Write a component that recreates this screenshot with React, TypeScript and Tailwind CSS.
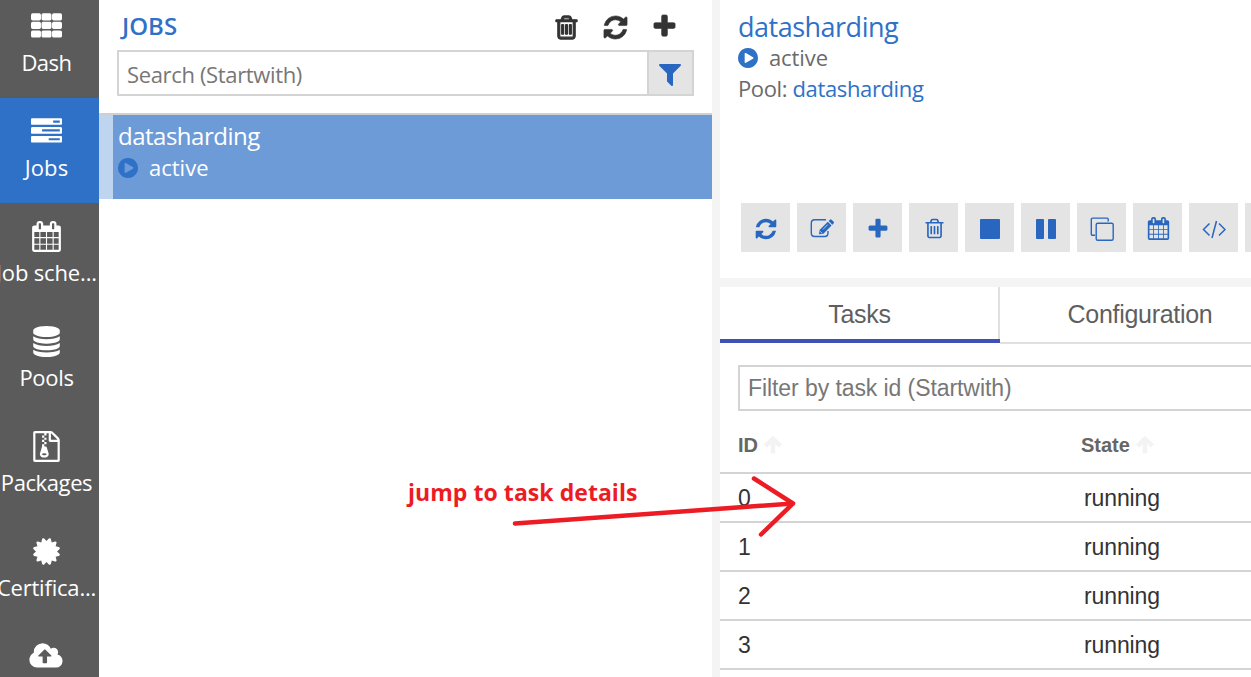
import React from "react";

const paths = {
  th: "M96 128h384q96 0 96 96v224q0 96-96 96h-384q-96 0-96-96v-224q0-96 96-96zM704 128h384q96 0 96 96v224q0 96-96 96h-384q-96 0-96-96v-224q0-96 96-96zM1312 128h384q96 0 96 96v224q0 96-96 96h-384q-96 0-96-96v-224q0-96 96-96zM96 624h384q96 0 96 96v224q0 96-96 96h-384q-96 0-96-96v-224q0-96 96-96zM704 624h384q96 0 96 96v224q0 96-96 96h-384q-96 0-96-96v-224q0-96 96-96zM1312 624h384q96 0 96 96v224q0 96-96 96h-384q-96 0-96-96v-224q0-96 96-96zM96 1120h384q96 0 96 96v224q0 96-96 96h-384q-96 0-96-96v-224q0-96 96-96zM704 1120h384q96 0 96 96v224q0 96-96 96h-384q-96 0-96-96v-224q0-96 96-96zM1312 1120h384q96 0 96 96v224q0 96-96 96h-384q-96 0-96-96v-224q0-96 96-96z",
  tasks:
    "M1024 1408h640v-128h-640v128zm-384-512h1024v-128h-1024v128zm640-512h384v-128h-384v128zm512 832v256q0 26-19 45t-45 19h-1664q-26 0-45-19t-19-45v-256q0-26 19-45t45-19h1664q26 0 45 19t19 45zm0-512v256q0 26-19 45t-45 19h-1664q-26 0-45-19t-19-45v-256q0-26 19-45t45-19h1664q26 0 45 19t19 45zm0-512v256q0 26-19 45t-45 19h-1664q-26 0-45-19t-19-45v-256q0-26 19-45t45-19h1664q26 0 45 19t19 45z",
  refresh:
    "M1639 1056q0 5-1 7-64 268-268 434.5t-478 166.5q-146 0-282.5-55t-243.5-157l-129 129q-19 19-45 19t-45-19-19-45v-448q0-26 19-45t45-19h448q26 0 45 19t19 45-19 45l-137 137q71 66 161 102t187 36q134 0 250-65t186-179q11-17 53-117 8-23 30-23h192q13 0 22.5 9.5t9.5 22.5zm25-800v448q0 26-19 45t-45 19h-448q-26 0-45-19t-19-45 19-45l138-138q-148-137-349-137-134 0-250 65t-186 179q-11 17-53 117-8 23-30 23h-199q-13 0-22.5-9.5t-9.5-22.5v-7q65-268 270-434.5t480-166.5q146 0 284 55.5t245 156.5l130-129q19-19 45-19t45 19 19 45z",
  trash:
    "M704 736v576q0 14-9 23t-23 9h-64q-14 0-23-9t-9-23v-576q0-14 9-23t23-9h64q14 0 23 9t9 23zm256 0v576q0 14-9 23t-23 9h-64q-14 0-23-9t-9-23v-576q0-14 9-23t23-9h64q14 0 23 9t9 23zm256 0v576q0 14-9 23t-23 9h-64q-14 0-23-9t-9-23v-576q0-14 9-23t23-9h64q14 0 23 9t9 23zm128 724v-948h-896v948q0 22 7 40.5t14.5 27 10.5 8.5h832q3 0 10.5-8.5t14.5-27 7-40.5zm-672-1076h448l-48-117q-7-9-17-11h-317q-10 2-17 11zm928 32v64q0 14-9 23t-23 9h-96v948q0 83-47 143.5t-113 60.5h-832q-66 0-113-58.5t-47-141.5v-952h-96q-14 0-23-9t-9-23v-64q0-14 9-23t23-9h309l70-167q15-37 54-63t79-26h320q40 0 79 26t54 63l70 167h309q14 0 23 9t9 23z",
  plus: "M1600 736v192q0 40-28 68t-68 28h-416v416q0 40-28 68t-68 28h-192q-40 0-68-28t-28-68v-416h-416q-40 0-68-28t-28-68v-192q0-40 28-68t68-28h416v-416q0-40 28-68t68-28h192q40 0 68 28t28 68v416h416q40 0 68 28t28 68z",
  filter:
    "M1595 295q17 41-14 70l-493 493v742q0 42-39 59-13 5-25 5-27 0-45-19l-256-256q-19-19-19-45v-486l-493-493q-31-29-14-70 17-39 59-39h1280q42 0 59 39z",
  play: "M896 128q209 0 385.5 103t279.5 279.5 103 385.5-103 385.5-279.5 279.5-385.5 103-385.5-103-279.5-279.5-103-385.5 103-385.5 279.5-279.5 385.5-103zm384 823q32-18 32-55t-32-55l-544-320q-31-19-64-1-32 19-32 55v640q0 36 32 55 16 8 32 8 17 0 32-9z",
  database:
    "M896 768q237 0 443-43t325-127v170q0 69-103 128t-280 93.5-385 34.5-385-34.5-280-93.5-103-128v-170q119 84 325 127t443 43zm0 768q237 0 443-43t325-127v170q0 69-103 128t-280 93.5-385 34.5-385-34.5-280-93.5-103-128v-170q119 84 325 127t443 43zm0-384q237 0 443-43t325-127v170q0 69-103 128t-280 93.5-385 34.5-385-34.5-280-93.5-103-128v-170q119 84 325 127t443 43zm0-1152q208 0 385 34.5t280 93.5 103 128v128q0 69-103 128t-280 93.5-385 34.5-385-34.5-280-93.5-103-128v-128q0-69 103-128t280-93.5 385-34.5z",
  certificate:
    "M1376 896l138 135q30 28 20 70-12 41-52 51l-188 48 53 186q12 41-19 70-29 31-70 19l-186-53-48 188q-10 40-51 52-12 2-19 2-31 0-51-22l-135-138-135 138q-28 30-70 20-41-11-51-52l-48-188-186 53q-41 12-70-19-31-29-19-70l53-186-188-48q-40-10-52-51-10-42 20-70l138-135-138-135q-30-28-20-70 12-41 52-51l188-48-53-186q-12-41 19-70 29-31 70-19l186 53 48-188q10-41 51-51 41-12 70 19l135 139 135-139q29-30 70-19 41 10 51 51l48 188 186-53q41-12 70 19 31 29 19 70l-53 186 188 48q40 10 52 51 10 42-20 70z",
  calendar:
    "M192 1664h288v-288h-288v288zm352 0h320v-288h-320v288zm-352-352h288v-320h-288v320zm352 0h320v-320h-320v320zm-352-384h288v-288h-288v288zm736 736h320v-288h-320v288zm-384-736h320v-288h-320v288zm768 736h288v-288h-288v288zm-384-352h320v-320h-320v320zm-352-864v-288q0-13-9.5-22.5t-22.5-9.5h-64q-13 0-22.5 9.5t-9.5 22.5v288q0 13 9.5 22.5t22.5 9.5h64q13 0 22.5-9.5t9.5-22.5zm736 864h288v-320h-288v320zm-384-384h320v-288h-320v288zm384 0h288v-288h-288v288zm32-480v-288q0-13-9.5-22.5t-22.5-9.5h-64q-13 0-22.5 9.5t-9.5 22.5v288q0 13 9.5 22.5t22.5 9.5h64q13 0 22.5-9.5t9.5-22.5zm384-64v1280q0 52-38 90t-90 38h-1408q-52 0-90-38t-38-90v-1280q0-52 38-90t90-38h128v-96q0-66 47-113t113-47h64q66 0 113 47t47 113v96h384v-96q0-66 47-113t113-47h64q66 0 113 47t47 113v96h128q52 0 90 38t38 90z",
  cloud:
    "M1216 864q0-14-9-23l-352-352q-9-9-23-9t-23 9l-351 351q-10 12-10 24 0 14 9 23t23 9h224v352q0 13 9.5 22.5t22.5 9.5h192q13 0 22.5-9.5t9.5-22.5v-352h224q13 0 22.5-9.5t9.5-22.5zm640 288q0 159-112.5 271.5t-271.5 112.5h-1088q-185 0-316.5-131.5t-131.5-316.5q0-130 70-240t188-165q-2-30-2-43 0-212 150-362t362-150q156 0 285.5 87t188.5 231q71-62 166-62 106 0 181 75t75 181q0 76-41 138 130 31 213.5 135.5t83.5 238.5z",
  archive:
    "M768 384v-128h-128v128h128zm128 128v-128h-128v128h128zm-128 128v-128h-128v128h128zm128 128v-128h-128v128h128zm700-388q28 28 48 76t20 88v1152q0 40-28 68t-68 28h-1344q-40 0-68-28t-28-68v-1600q0-40 28-68t68-28h896q40 0 88 20t76 48zm-444-244v376h376q-10-29-22-41l-313-313q-12-12-41-22zm384 1528v-1024h-416q-40 0-68-28t-28-68v-416h-128v128h-128v-128h-512v1536h1280zm-627-721l107 349q8 27 8 52 0 83-72.5 137.5t-183.5 54.5-183.5-54.5-72.5-137.5q0-25 8-52 21-63 120-396v-128h128v128h79q22 0 39 13t23 34zm-141 465q53 0 90.5-19t37.5-45-37.5-45-90.5-19-90.5 19-37.5 45 37.5 45 90.5 19z",
};

type IconName = keyof typeof paths;

function Icon({ name, className, box = "0 0 1792 1792", bold = 0 }: { name: IconName; className: string; box?: string; bold?: number }) {
  return (
    <svg viewBox={box} className={`block shrink-0 overflow-visible ${className}`} fill="currentColor" stroke={bold ? "currentColor" : "none"} strokeWidth={bold}>
      <path d={paths[name]} />
    </svg>
  );
}

const nav: { label: string; icon: IconName; box?: string; spacing: string }[] = [
  { label: "Dash", icon: "th", spacing: "tracking-[-0.5px]" },
  { label: "Jobs", icon: "tasks", spacing: "tracking-[0.1px]" },
  { label: "Job sche...", icon: "calendar", spacing: "tracking-[-0.15px]" },
  { label: "Pools", icon: "database", spacing: "tracking-[-0.3px]" },
  { label: "Packages", icon: "archive", spacing: "tracking-[-0.4px]" },
  { label: "Certifica...", icon: "certificate", box: "-128 0 1792 1792", spacing: "tracking-[-0.2px]" },
  { label: "", icon: "cloud", box: "32 0 1792 1792", spacing: "" },
];

function Sidebar() {
  return (
    <nav className="w-[99px] h-full shrink-0 overflow-hidden bg-[#5b5b5b] text-white">
      <div className="-mt-[7px]">
        {nav.map((n) => (
          <div key={n.icon} className={`flex h-[105px] flex-col items-center pr-[6px] pt-[18px] ${n.label === "Jobs" ? "bg-[#2f71c7]" : ""}`}>
            <Icon name={n.icon} box={n.box} className="size-[31px]" />
            <span className={`mt-[5px] whitespace-nowrap text-[22px] leading-[30px] ${n.spacing}`}>{n.label}</span>
          </div>
        ))}
      </div>
    </nav>
  );
}

function JobList() {
  return (
    <section className="flex h-full w-[613px] shrink-0 flex-col bg-white">
      <div className="flex h-[50px] items-center pl-[23px] pr-[34px] pt-[4px]">
        <h1 className="mb-[2px] flex-1 text-[24px] font-semibold leading-[30px] text-[#2f71c7]">JOBS</h1>
        <div className="flex items-center text-[#333]">
          <Icon name="trash" bold={80} className="mr-[22px] size-[27px]" />
          <Icon name="refresh" bold={40} className="mr-[22px] size-[27px]" />
          <Icon name="plus" bold={40} className="mb-[1px] size-[27px]" />
        </div>
      </div>
      <div className="ml-[18px] flex h-[46px] w-[577px] border-2 border-[#d4d4d4]">
        <div className="flex flex-1 items-center pl-[8px] pt-[2px] text-[22px] tracking-[-0.35px] text-[#777]">Search (Startwith)</div>
        <div className="flex w-[45px] items-center justify-center border-l-2 border-[#d4d4d4] bg-[#e4e4e4] pr-[1px] pt-[2px] text-[#2866c0]">
          <Icon name="filter" className="size-[28px]" />
        </div>
      </div>
      <div className="mt-[17px] border-t-2 border-[#d0d0d0]">
        <div className="h-[84px] border-l-[14px] border-[#bfd4ee] bg-[#6d9bd7] pl-[5px] pt-[4px] text-white">
          <div className="text-[24px] leading-[33px] tracking-[-0.5px]">datasharding</div>
          <div className="flex h-[31px] items-center">
            <Icon name="play" box="128 128 1536 1536" className="mr-[11px] size-[20px] text-[#2f71c7]" />
            <span className="-mt-[2px] text-[22px] leading-[30px]">active</span>
          </div>
        </div>
      </div>
    </section>
  );
}

const tools = [
  <Icon name="refresh" className="size-[24px]" />,
  <svg viewBox="0 0 24 24" className="size-[24px] overflow-visible" fill="none" stroke="currentColor">
    <path d="M16 2.700H4.700Q1.300 2.700 1.300 6.200V16Q1.300 19.500 4.700 19.500H14.700Q18 19.500 18 16V14" strokeWidth="1.400" />
    <path d="M9 17.300L9.600 13L17.800 4.800L21.600 8.600L13.400 16.800Z" fill="currentColor" stroke="none" />
    <path d="M18.600 4L20 2.700Q20.800 2 21.600 2.700L23.700 4.800Q24.400 5.600 23.700 6.300L22.400 7.800Z" fill="currentColor" stroke="none" />
    <path d="M13 12.400L17.800 7.600M10.200 14.400L12 16.200" stroke="#e4e4e4" strokeWidth="0.800" />
  </svg>,
  <Icon name="plus" className="size-[24px]" />,
  <Icon name="trash" className="size-[23px]" />,
  <svg viewBox="0 0 20 20" className="size-[20px]" fill="currentColor">
    <rect width="20" height="20" rx="1" />
  </svg>,
  <svg viewBox="0 0 20 20" className="size-[20px]" fill="currentColor">
    <rect width="8" height="20" rx="1" />
    <rect x="12" width="8" height="20" rx="1" />
  </svg>,
  <svg viewBox="0 0 24 24" className="size-[24px]" fill="none" stroke="currentColor" strokeWidth="1.400">
    <rect x="6.200" y="6.200" width="17" height="17" rx="1.500" />
    <path d="M5 18.200H2.500Q1.300 18.200 1.300 17V2.300Q1.300 1.100 2.500 1.100H17Q18.200 1.100 18.200 2.300V4.500" />
  </svg>,
  <Icon name="calendar" className="size-[23px]" />,
  <svg viewBox="0 0 24 24" className="size-[24px]" fill="none" stroke="currentColor" strokeWidth="1.500">
    <path d="M7.500 6.500L1.500 12.500L7.500 18.500M17 6.500L23 12.500L17 18.500M14.500 4L10 21" />
  </svg>,
  null,
];

function SortArrow() {
  return (
    <svg viewBox="0 0 18 18" className="ml-[6px] size-[18px]" fill="none" stroke="#f3f3f3" strokeWidth="4.500">
      <path d="M1.500 10L9 2.800L16.500 10M9 4V17.500" />
    </svg>
  );
}

function Details() {
  return (
    <section className="flex h-full min-w-0 flex-1 flex-col overflow-hidden bg-white">
      <header className="h-[278px] shrink-0 pl-[18px] pt-[11px] text-[#6a6a6a]">
        <div className="text-[27px] leading-[32px] tracking-[-0.5px] text-[#2f71c7]">datasharding</div>
        <div className="flex h-[29px] items-center">
          <Icon name="play" box="128 128 1536 1536" className="mr-[11px] size-[20px] text-[#2f71c7]" />
          <span className="-mt-[2px] text-[22px] leading-[30px] tracking-[-0.1px]">active</span>
        </div>
        <div className="text-[22px] leading-[33px] tracking-[-0.37px]">
          Pool: <span className="text-[#2f71c7]">datasharding</span>
        </div>
        <div className="ml-[3px] mt-[98px] flex gap-[7px]">
          {tools.map((t, i) => (
            <div key={i} className="flex size-[49px] shrink-0 items-center justify-center bg-[#e4e4e4] pl-[1px] pt-[2px] text-[#2866c0]">
              {t}
            </div>
          ))}
        </div>
      </header>
      <div className="h-[9px] shrink-0 bg-[#f4f4f4]" />
      <div className="flex h-[57px] shrink-0 font-['Liberation_Sans',sans-serif] text-[25px] tracking-[-0.3px] text-[#5f5f5f]">
        <div className="flex h-[56px] w-[280px] shrink-0 flex-col">
          <div className="flex h-[52px] items-center justify-center border-r-2 border-[#e0e0e0] pl-[1px] pt-[3px]">Tasks</div>
          <div className="h-[4px] bg-[#3f51b5]" />
        </div>
        <div className="flex w-[280px] shrink-0 items-center justify-center border-b-2 border-[#e0e0e0]">Configuration</div>
      </div>
      <div className="flex min-h-0 flex-1 flex-col font-['Liberation_Sans',sans-serif] text-[#333]">
        <div className="ml-[18px] mt-[21px] flex h-[46px] w-[600px] shrink-0 items-center border-2 border-[#d4d4d4] pl-[8px] text-[23px] tracking-[-0.08px] text-[#777]">Filter by task id (Startwith)</div>
        <div className="flex h-[63px] shrink-0 items-center border-b-2 border-[#d4d4d4] pl-[18px] pt-[6px] text-[20px] font-bold text-[#666]">
          <div className="flex w-[343px] items-center">ID<SortArrow /></div>
          <div className="flex items-center">State<SortArrow /></div>
        </div>
        {[0, 1, 2, 3].map((id) => (
          <div key={id} className="flex h-[49px] shrink-0 items-center border-b-2 border-[#d4d4d4] pl-[18px] pt-[2px] text-[23px] tracking-[-0.12px]">
            <div className="w-[346px]">{id}</div>
            <div>running</div>
          </div>
        ))}
      </div>
    </section>
  );
}

export default function App() {
  return (
    <div className="relative flex h-[677px] w-[1251px] overflow-hidden bg-white font-['Open_Sans',sans-serif]">
      <Sidebar />
      <JobList />
      <div className="w-[8px] shrink-0 bg-[#f4f4f4]" />
      <Details />
      <div className="absolute left-[408px] top-[476px] whitespace-nowrap text-[23px] font-bold leading-[32px] tracking-[0.05px] text-[#ed1c24]">jump to task details</div>
      <svg viewBox="0 0 290 70" className="absolute left-[510px] top-[470px] h-[70px] w-[290px]" fill="none" stroke="#ed1c24" strokeWidth="4.500" strokeLinecap="round" strokeLinejoin="round">
        <path d="M5 53.500L283 33.500M244 8.500L283 33.500L251 64.500" />
      </svg>
    </div>
  );
}
